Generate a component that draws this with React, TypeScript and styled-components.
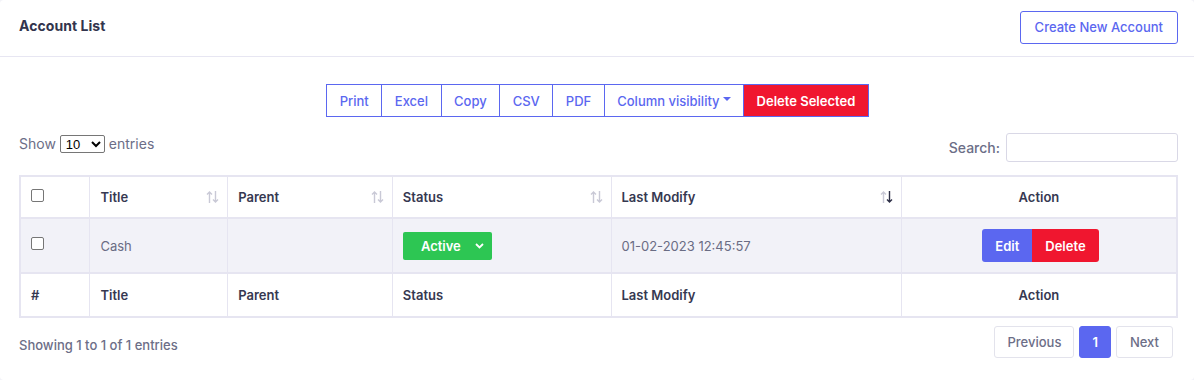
import React from "react";
import styled, { createGlobalStyle } from "styled-components";

const Global = createGlobalStyle`
  html, body { margin: 0; padding: 0; background: #f3f3f8; }
  body { font-family: Inter, "Noto Sans", sans-serif; }
  * { box-sizing: border-box; }
`;

const Card = styled.div`
  background: #fff;
  width: 1194px;
  height: 380px;
  border-radius: 4px;
  overflow: hidden;
`;

const Header = styled.div`
  height: 57px;
  border-bottom: 1px solid #e7e6f2;
  display: flex;
  align-items: center;
  justify-content: space-between;
  padding: 0 16px 0 19px;
`;

const Title = styled.h4`
  margin: 0;
  font-size: 14px;
  font-weight: 700;
  color: #32344d;
  letter-spacing: 0.05px;
  margin-top: -6px;
`;

const OutlineButton = styled.button`
  font-family: inherit;
  height: 33px;
  padding: 0 14px;
  background: #fff;
  border: 1px solid #5b67f0;
  color: #5b67f0;
  border-radius: 3px;
  font-size: 13px;
  font-weight: 500;
  margin-top: -2px;
`;

const Body = styled.div`
  padding: 27px 16px 0 19px;
`;

const ButtonGroup = styled.div`
  display: flex;
  justify-content: center;
  margin-right: 2px;
`;

const GroupButton = styled.button<{ $danger?: boolean }>`
  font-family: inherit;
  height: 33px;
  padding: 0 12.5px;
  font-size: 13px;
  font-weight: ${(p) => (p.$danger ? 600 : 500)};
  background: ${(p) => (p.$danger ? "#f0162f" : "#fff")};
  color: ${(p) => (p.$danger ? "#fff" : "#5b67f0")};
  border: 1px solid #5b67f0;
  border-left-width: 0;
  display: flex;
  align-items: center;
  gap: 3px;
  &:first-child { border-left-width: 1px; }
`;

const Caret = styled.span`
  width: 0;
  height: 0;
  border-left: 4px solid transparent;
  border-right: 4px solid transparent;
  border-top: 4px solid #5b67f0;
  margin-top: -3px;
`;

const Controls = styled.div`
  display: flex;
  justify-content: space-between;
  align-items: flex-start;
  margin-top: 17px;
`;

const Label = styled.label`
  font-size: 14px;
  color: #6c6e87;
  display: flex;
  align-items: center;
  gap: 4px;
`;

const Select = styled.select`
  font-family: Arial, "Liberation Sans", sans-serif;
  font-size: 13px;
  height: 18px;
  width: 45px;
  padding: 0 0 0 1px;
  margin-top: 1px;
  border: 1px solid #767676;
  border-radius: 2px;
  color: #000;
  background: #fff;
`;

const SearchLabel = styled(Label)`
  gap: 6px;
  font-weight: 500;
  margin-top: -1px;
`;

const SearchInput = styled.input`
  width: 172px;
  height: 29px;
  border: 1px solid #d9d8e6;
  border-radius: 3px;
`;

const Table = styled.table`
  width: 1159px;
  margin-top: 13px;
  border-collapse: collapse;
  border: 2px solid #e6e5f1;
  font-size: 13px;
`;

const Th = styled.th<{ $w: number; $center?: boolean }>`
  width: ${(p) => p.$w}px;
  height: 42px;
  border: 1px solid #e6e5f1;
  border-bottom-width: 2px;
  padding: 0 10px;
  text-align: ${(p) => (p.$center ? "center" : "left")};
  color: #363851;
  font-weight: 600;
  position: relative;
`;

const FootTh = styled(Th)`
  height: 44px;
  border-bottom-width: 1px;
  border-top-width: 2px;
`;

const Td = styled.td<{ $center?: boolean }>`
  height: 55px;
  border: 1px solid #e6e5f1;
  padding: 0 10px;
  background: #f2f2f8;
  color: #6a6c84;
  text-align: ${(p) => (p.$center ? "center" : "left")};
`;

const Check = styled.span`
  display: inline-block;
  width: 13px;
  height: 13px;
  border: 1px solid #767676;
  border-radius: 2px;
  background: #fff;
  vertical-align: middle;
  margin-top: -6px;
`;

const SortIcon = styled.span`
  position: absolute;
  right: 8px;
  top: 50%;
  transform: translateY(-50%);
  display: flex;
`;

const Sort = ({ active }: { active?: boolean }) => (
  <SortIcon>
    <svg width="13" height="14" viewBox="0 0 13 14">
      <g stroke="#c9c9d6" strokeWidth="1.4" fill="none">
        <path d="M3.5 13V2M1 4.5L3.5 2L6 4.5" />
      </g>
      <g stroke={active ? "#2e3047" : "#c9c9d6"} strokeWidth="1.4" fill="none">
        <path d="M9.5 1V12M7 9.5L9.5 12L12 9.5" />
      </g>
    </svg>
  </SortIcon>
);

const StatusButton = styled.button`
  font-family: inherit;
  width: 89px;
  height: 28px;
  background: #2dc653;
  border: none;
  border-radius: 2px;
  color: #fff;
  font-weight: 600;
  font-size: 13px;
  display: flex;
  align-items: center;
  justify-content: center;
  gap: 14px;
  padding: 0 0 0 10px;
  margin-top: 1px;
`;

const ActionGroup = styled.div`
  display: inline-flex;
  margin-left: 3px;
`;

const ActionButton = styled.button<{ $bg: string; $r: string }>`
  font-family: inherit;
  height: 33px;
  padding: 0 13px;
  background: ${(p) => p.$bg};
  color: #fff;
  border: none;
  font-weight: 600;
  font-size: 13px;
  border-radius: ${(p) => p.$r};
`;

const Footer = styled.div`
  display: flex;
  justify-content: space-between;
  align-items: center;
  margin-top: 8px;
`;

const Info = styled.div`
  font-size: 13px;
  color: #6c6e87;
  font-weight: 500;
  margin-top: 5px;
`;

const Pager = styled.div`
  display: flex;
  gap: 5px;
  margin-right: 5px;
`;

const PageButton = styled.button<{ $active?: boolean; $px?: number }>`
  font-family: inherit;
  height: 32px;
  padding: 0 ${(p) => p.$px ?? 13}px;
  font-size: 13px;
  font-weight: ${(p) => (p.$active ? 600 : 500)};
  border-radius: 3px;
  border: 1px solid ${(p) => (p.$active ? "#5b67f0" : "#e3e3ec")};
  background: ${(p) => (p.$active ? "#5b67f0" : "#fff")};
  color: ${(p) => (p.$active ? "#fff" : "#6c6e87")};
`;

const Chevron = () => (
  <svg width="9" height="6" viewBox="0 0 9 6">
    <path d="M1 1l3.5 3.5L8 1" stroke="#fff" strokeWidth="1.8" fill="none" />
  </svg>
);

const cols = [70, 138, 165, 219, 291, 276];

export default function App() {
  return (
    <>
      <Global />
      <Card>
        <Header>
          <Title>Account List</Title>
          <OutlineButton>Create New Account</OutlineButton>
        </Header>
        <Body>
          <ButtonGroup>
            <GroupButton>Print</GroupButton>
            <GroupButton>Excel</GroupButton>
            <GroupButton>Copy</GroupButton>
            <GroupButton>CSV</GroupButton>
            <GroupButton>PDF</GroupButton>
            <GroupButton>
              Column visibility <Caret />
            </GroupButton>
            <GroupButton $danger>Delete Selected</GroupButton>
          </ButtonGroup>
          <Controls>
            <Label>
              Show
              <Select defaultValue="10">
                <option>10</option>
                <option>25</option>
                <option>50</option>
              </Select>
              entries
            </Label>
            <SearchLabel>
              Search:
              <SearchInput />
            </SearchLabel>
          </Controls>
          <Table>
            <thead>
              <tr>
                <Th $w={cols[0]}>
                  <Check />
                </Th>
                <Th $w={cols[1]}>
                  Title <Sort />
                </Th>
                <Th $w={cols[2]}>
                  Parent <Sort />
                </Th>
                <Th $w={cols[3]}>
                  Status <Sort />
                </Th>
                <Th $w={cols[4]}>
                  Last Modify <Sort active />
                </Th>
                <Th $w={cols[5]} $center>
                  Action
                </Th>
              </tr>
            </thead>
            <tbody>
              <tr>
                <Td>
                  <Check />
                </Td>
                <Td>Cash</Td>
                <Td></Td>
                <Td>
                  <StatusButton>
                    Active <Chevron />
                  </StatusButton>
                </Td>
                <Td>01-02-2023 12:45:57</Td>
                <Td $center>
                  <ActionGroup>
                    <ActionButton $bg="#5b67f0" $r="3px 0 0 3px">
                      Edit
                    </ActionButton>
                    <ActionButton $bg="#f0162f" $r="0 3px 3px 0">
                      Delete
                    </ActionButton>
                  </ActionGroup>
                </Td>
              </tr>
            </tbody>
            <tfoot>
              <tr>
                {["#", "Title", "Parent", "Status", "Last Modify", "Action"].map((n, i) => (
                  <FootTh key={n} $w={cols[i]} $center={i === 5}>
                    {n}
                  </FootTh>
                ))}
              </tr>
            </tfoot>
          </Table>
          <Footer>
            <Info>Showing 1 to 1 of 1 entries</Info>
            <Pager>
              <PageButton $px={12}>Previous</PageButton>
              <PageButton $active $px={12}>1</PageButton>
              <PageButton>Next</PageButton>
            </Pager>
          </Footer>
        </Body>
      </Card>
    </>
  );
}
